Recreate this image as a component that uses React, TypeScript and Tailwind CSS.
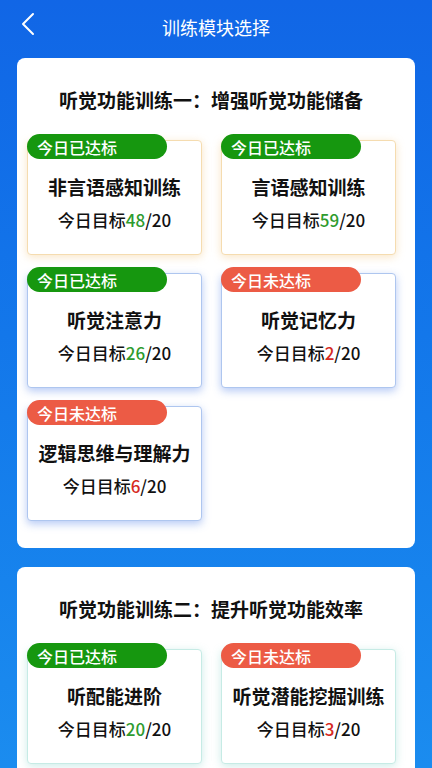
import React from "react";

type Item = { name: string; done: number; ok: boolean };

const tone = {
  orange: "border-[#f5dcb0] shadow-[0_2px_8px_rgba(240,190,110,0.4)]",
  blue: "border-[#aec6ef] shadow-[0_3px_9px_rgba(70,120,230,0.4)]",
  teal: "border-[#c6ebe5] shadow-[0_2px_8px_rgba(110,200,190,0.35)]",
};

const Tile = ({ item, cls }: { item: Item; cls: string }) => (
  <div className={`relative h-[115px] w-[175px] rounded-[4px] border bg-white ${cls}`}>
    <div
      className={`absolute left-[-1px] top-[-7px] flex h-[25px] w-[140px] items-center rounded-full pl-[10px] text-[16px] font-medium leading-none text-white ${
        item.ok ? "bg-[#16970f]" : "bg-[#ec5b45]"
      }`}
    >
      {item.ok ? "今日已达标" : "今日未达标"}
    </div>
    <div className="flex flex-col items-center pt-[33px]">
      <div className="text-[19px] font-bold leading-[26px] text-[#111]">{item.name}</div>
      <div className="mt-[8px] text-[17px] font-medium leading-[24px] text-[#111]">
        今日目标
        <span className={item.ok ? "text-[#2e9b2e]" : "text-[#d62a22]"}>{item.done}</span>
        /20
      </div>
    </div>
  </div>
);

const Section = ({ title, items, colors }: { title: string; items: Item[]; colors: string[] }) => (
  <div className="mx-[17px] rounded-[8px] bg-white pb-[27px] pl-[10px] pr-[20px] pt-[30px]">
    <h2 className="text-center text-[19px] font-bold leading-[24px] text-[#111]">{title}</h2>
    <div className="mt-[28px] grid grid-cols-[175px_175px] gap-x-[19px] gap-y-[18px]">
      {items.map((it, i) => (
        <Tile key={it.name} item={it} cls={tone[colors[i] as keyof typeof tone]} />
      ))}
    </div>
  </div>
);

export default function App() {
  return (
    <div
      className="h-[768px] w-[432px] overflow-hidden bg-gradient-to-b from-[#1166e6] to-[#1b8cef]"
      style={{ fontFamily: '"Noto Sans CJK SC", "Noto Sans", sans-serif' }}
    >
      <div className="relative flex h-[58px] items-center justify-center">
        <svg
          className="absolute left-[20px] top-[12px]"
          width="16"
          height="24"
          viewBox="0 0 16 24"
          fill="none"
          stroke="white"
          strokeWidth="2"
          strokeLinecap="round"
          strokeLinejoin="round"
        >
          <path d="M13 2 L3 12 L13 22" />
        </svg>
        <div className="-mt-[3px] text-[18px] text-white">训练模块选择</div>
      </div>
      <Section
        title="听觉功能训练一：增强听觉功能储备"
        colors={["orange", "orange", "blue", "blue", "blue"]}
        items={[
          { name: "非言语感知训练", done: 48, ok: true },
          { name: "言语感知训练", done: 59, ok: true },
          { name: "听觉注意力", done: 26, ok: true },
          { name: "听觉记忆力", done: 2, ok: false },
          { name: "逻辑思维与理解力", done: 6, ok: false },
        ]}
      />
      <div className="h-[19px]" />
      <Section
        title="听觉功能训练二：提升听觉功能效率"
        colors={["teal", "teal"]}
        items={[
          { name: "听配能进阶", done: 20, ok: true },
          { name: "听觉潜能挖掘训练", done: 3, ok: false },
        ]}
      />
    </div>
  );
}
